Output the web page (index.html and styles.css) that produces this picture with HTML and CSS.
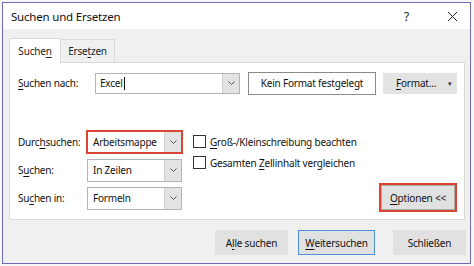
FILE: index.html
```html
<!DOCTYPE html>
<html lang="de">
<head>
<meta charset="utf-8">
<title>Suchen und Ersetzen</title>
<link rel="stylesheet" href="styles.css">
</head>
<body>
<div class="dialog">
  <div class="titlebar">
    <span class="title">Suchen und Ersetzen</span>
    <span class="help">?</span>
    <span class="close">
      <svg width="11" height="11" viewBox="0 0 11 11"><path d="M1 1 L10 10 M10 1 L1 10" stroke="#222" stroke-width="1" fill="none"/></svg>
    </span>
  </div>
  <div class="body">
    <div class="tabs">
      <div class="tab active">Suche<u>n</u></div>
      <div class="tab">Erse<u>t</u>zen</div>
    </div>
    <div class="panel">
      <div class="row-find">
        <label class="lbl lbl-find"><u>S</u>uchen nach:</label>
        <div class="combo combo-find">
          <span class="combo-text">Excel<span class="caret"></span></span>
          <span class="drop"><svg width="7" height="4" viewBox="0 0 7 4"><path d="M0.5 0.5 L3.5 3.5 L6.5 0.5" stroke="#555" fill="none"/></svg></span>
        </div>
        <button class="btn btn-white">Kein Format festgelegt</button>
        <button class="btn btn-format"><span><u>F</u>ormat...</span><span class="tri">&#9662;</span></button>
      </div>
      <div class="options">
        <div class="selects">
          <div class="sel-row">
            <label class="lbl lbl-sel">Durc<u>h</u>suchen:</label>
            <div class="combo combo-sel marked">
              <span class="combo-text">Arbeitsmappe</span>
              <span class="drop"><svg width="7" height="4" viewBox="0 0 7 4"><path d="M0.5 0.5 L3.5 3.5 L6.5 0.5" stroke="#555" fill="none"/></svg></span>
            </div>
          </div>
          <div class="sel-row">
            <label class="lbl lbl-sel">S<u>u</u>chen:</label>
            <div class="combo combo-sel">
              <span class="combo-text">In Zeilen</span>
              <span class="drop"><svg width="7" height="4" viewBox="0 0 7 4"><path d="M0.5 0.5 L3.5 3.5 L6.5 0.5" stroke="#555" fill="none"/></svg></span>
            </div>
          </div>
          <div class="sel-row">
            <label class="lbl lbl-sel">Su<u>c</u>hen in:</label>
            <div class="combo combo-sel">
              <span class="combo-text">Formeln</span>
              <span class="drop"><svg width="7" height="4" viewBox="0 0 7 4"><path d="M0.5 0.5 L3.5 3.5 L6.5 0.5" stroke="#555" fill="none"/></svg></span>
            </div>
          </div>
        </div>
        <div class="checks">
          <div class="check"><span class="box"></span><span><u>G</u>roß-/Kleinschreibung beachten</span></div>
          <div class="check"><span class="box"></span><span>Gesamten <u>Z</u>ellinhalt vergleichen</span></div>
        </div>
        <div class="opt-wrap">
          <button class="btn btn-grey btn-opt"><u>O</u>ptionen &lt;&lt;</button>
        </div>
      </div>
    </div>
    <div class="actions">
      <button class="btn btn-grey btn-act">A<u>l</u>le suchen</button>
      <button class="btn btn-grey btn-act btn-default"><u>W</u>eitersuchen</button>
      <button class="btn btn-grey btn-act">Schließen</button>
    </div>
  </div>
</div>
</body>
</html>
```
FILE: styles.css
```css
* { box-sizing: border-box; }
html, body { margin: 0; padding: 0; }
body {
  width: 474px;
  height: 266px;
  background: #f7f7f7;
  padding: 2px 0 0 2px;
  font-family: "Noto Sans", "Open Sans", sans-serif;
  font-size: 10px;
  letter-spacing: -0.2px;
  color: #111;
  overflow: hidden;
}
u { text-decoration: underline; text-underline-offset: 2px; text-decoration-thickness: 1px; }
.dialog {
  width: 469px;
  height: 262px;
  border: 1px solid #6e6db3;
  background: #f0f0f0;
  display: flex;
  flex-direction: column;
}
.titlebar {
  height: 26px;
  background: #fff;
  display: flex;
  align-items: center;
  padding: 0 0 0 8px;
}
.title { font-size: 11.5px; flex: 1; color: #111; padding-top: 1px; }
.help { font-size: 12px; width: 12px; margin-right: 30px; color: #222; padding-left: 1px; }
.close { width: 22px; display: flex; align-items: center; margin-right: 3px; padding-left: 2px; }
.body {
  flex: 1;
  padding: 9px 4px 0 6px;
  display: flex;
  flex-direction: column;
}
.tabs { display: flex; align-items: flex-end; height: 24px; }
.tab {
  height: 23px;
  padding: 0 8px;
  border: 1px solid #d9d9d9;
  border-bottom: none;
  background: #f0f0f0;
  display: flex;
  align-items: center;
  color: #222;
}
.tab.active {
  height: 25px;
  width: 52px;
  background: #fff;
  border-color: #d9d9d9;
  justify-content: center;
  position: relative;
  margin-bottom: -1px;
  z-index: 1;
}
.tab:not(.active) { width: 54px; border-left: none; justify-content: center; }
.panel {
  width: 456px;
  height: 158px;
  background: #fff;
  border: 1px solid #d9d9d9;
  padding: 9px 0 0 8px;
}
.row-find { display: flex; align-items: center; height: 22px; }
.lbl { color: #111; }
.lbl-find { width: 77px; }
.combo {
  display: flex;
  height: 21px;
  border: 1px solid #b4b4b4;
  background: #fff;
}
.combo-text { flex: 1; padding-left: 4px; display: flex; align-items: center; }
.caret { display: inline-block; width: 1px; height: 13px; background: #111; margin-left: 1px; }
.drop {
  width: 17px;
  background: #e3e3e3;
  border-left: 1px solid #cfcfcf;
  display: flex;
  align-items: center;
  justify-content: center;
}
.combo-find { width: 145px; }
.btn {
  font-family: inherit;
  font-size: 10px;
  letter-spacing: -0.2px;
  color: #111;
  padding: 0;
  margin: 0;
  display: flex;
  align-items: center;
  justify-content: center;
}
.btn-white {
  margin-left: 8px;
  width: 128px;
  height: 23px;
  background: #fff;
  border: 1px solid #8a8a8a;
}
.btn-format {
  margin-left: 7px;
  width: 74px;
  height: 21px;
  background: #e3e3e3;
  border: 1px solid #e3e3e3;
  gap: 12px;
  padding-left: 8px;
}
.tri { font-size: 7px; color: #333; }
.options {
  display: flex;
  margin-top: 37px;
}
.selects { display: flex; flex-direction: column; gap: 6px; }
.sel-row { display: flex; align-items: center; height: 22px; }
.lbl-sel { width: 69px; }
.combo-sel { width: 95px; height: 23px; }
.combo-sel .combo-text { padding-left: 5px; }
.marked { border: 2px solid #da4433; width: 97px; height: 24px; margin-left: -1px; }
.checks {
  display: flex;
  flex-direction: column;
  gap: 8px;
  margin-left: 10px;
  padding-top: 4px;
}
.check { display: flex; align-items: center; gap: 4px; height: 13px; }
.box { width: 13px; height: 13px; border: 1px solid #333; background: #fff; }
.opt-wrap {
  flex: 1;
  display: flex;
  justify-content: flex-end;
  align-items: flex-end;
  padding-right: 7px;
}
.btn-grey {
  background: #e1e1e1;
  border: 1px solid #e1e1e1;
}
.btn-opt {
  width: 78px;
  height: 29px;
  border: 2px solid #da4433;
  box-shadow: inset 0 0 0 1px #adadad;
  margin-bottom: -3px;
}
.actions {
  display: flex;
  justify-content: flex-end;
  gap: 10px;
  margin-top: 10px;
}
.btn-act { width: 73px; height: 25px; }
.btn-act:last-child { margin-left: 8px; }
.btn-default { border: 1px solid #4d8fd6; width: 77px; }
```
